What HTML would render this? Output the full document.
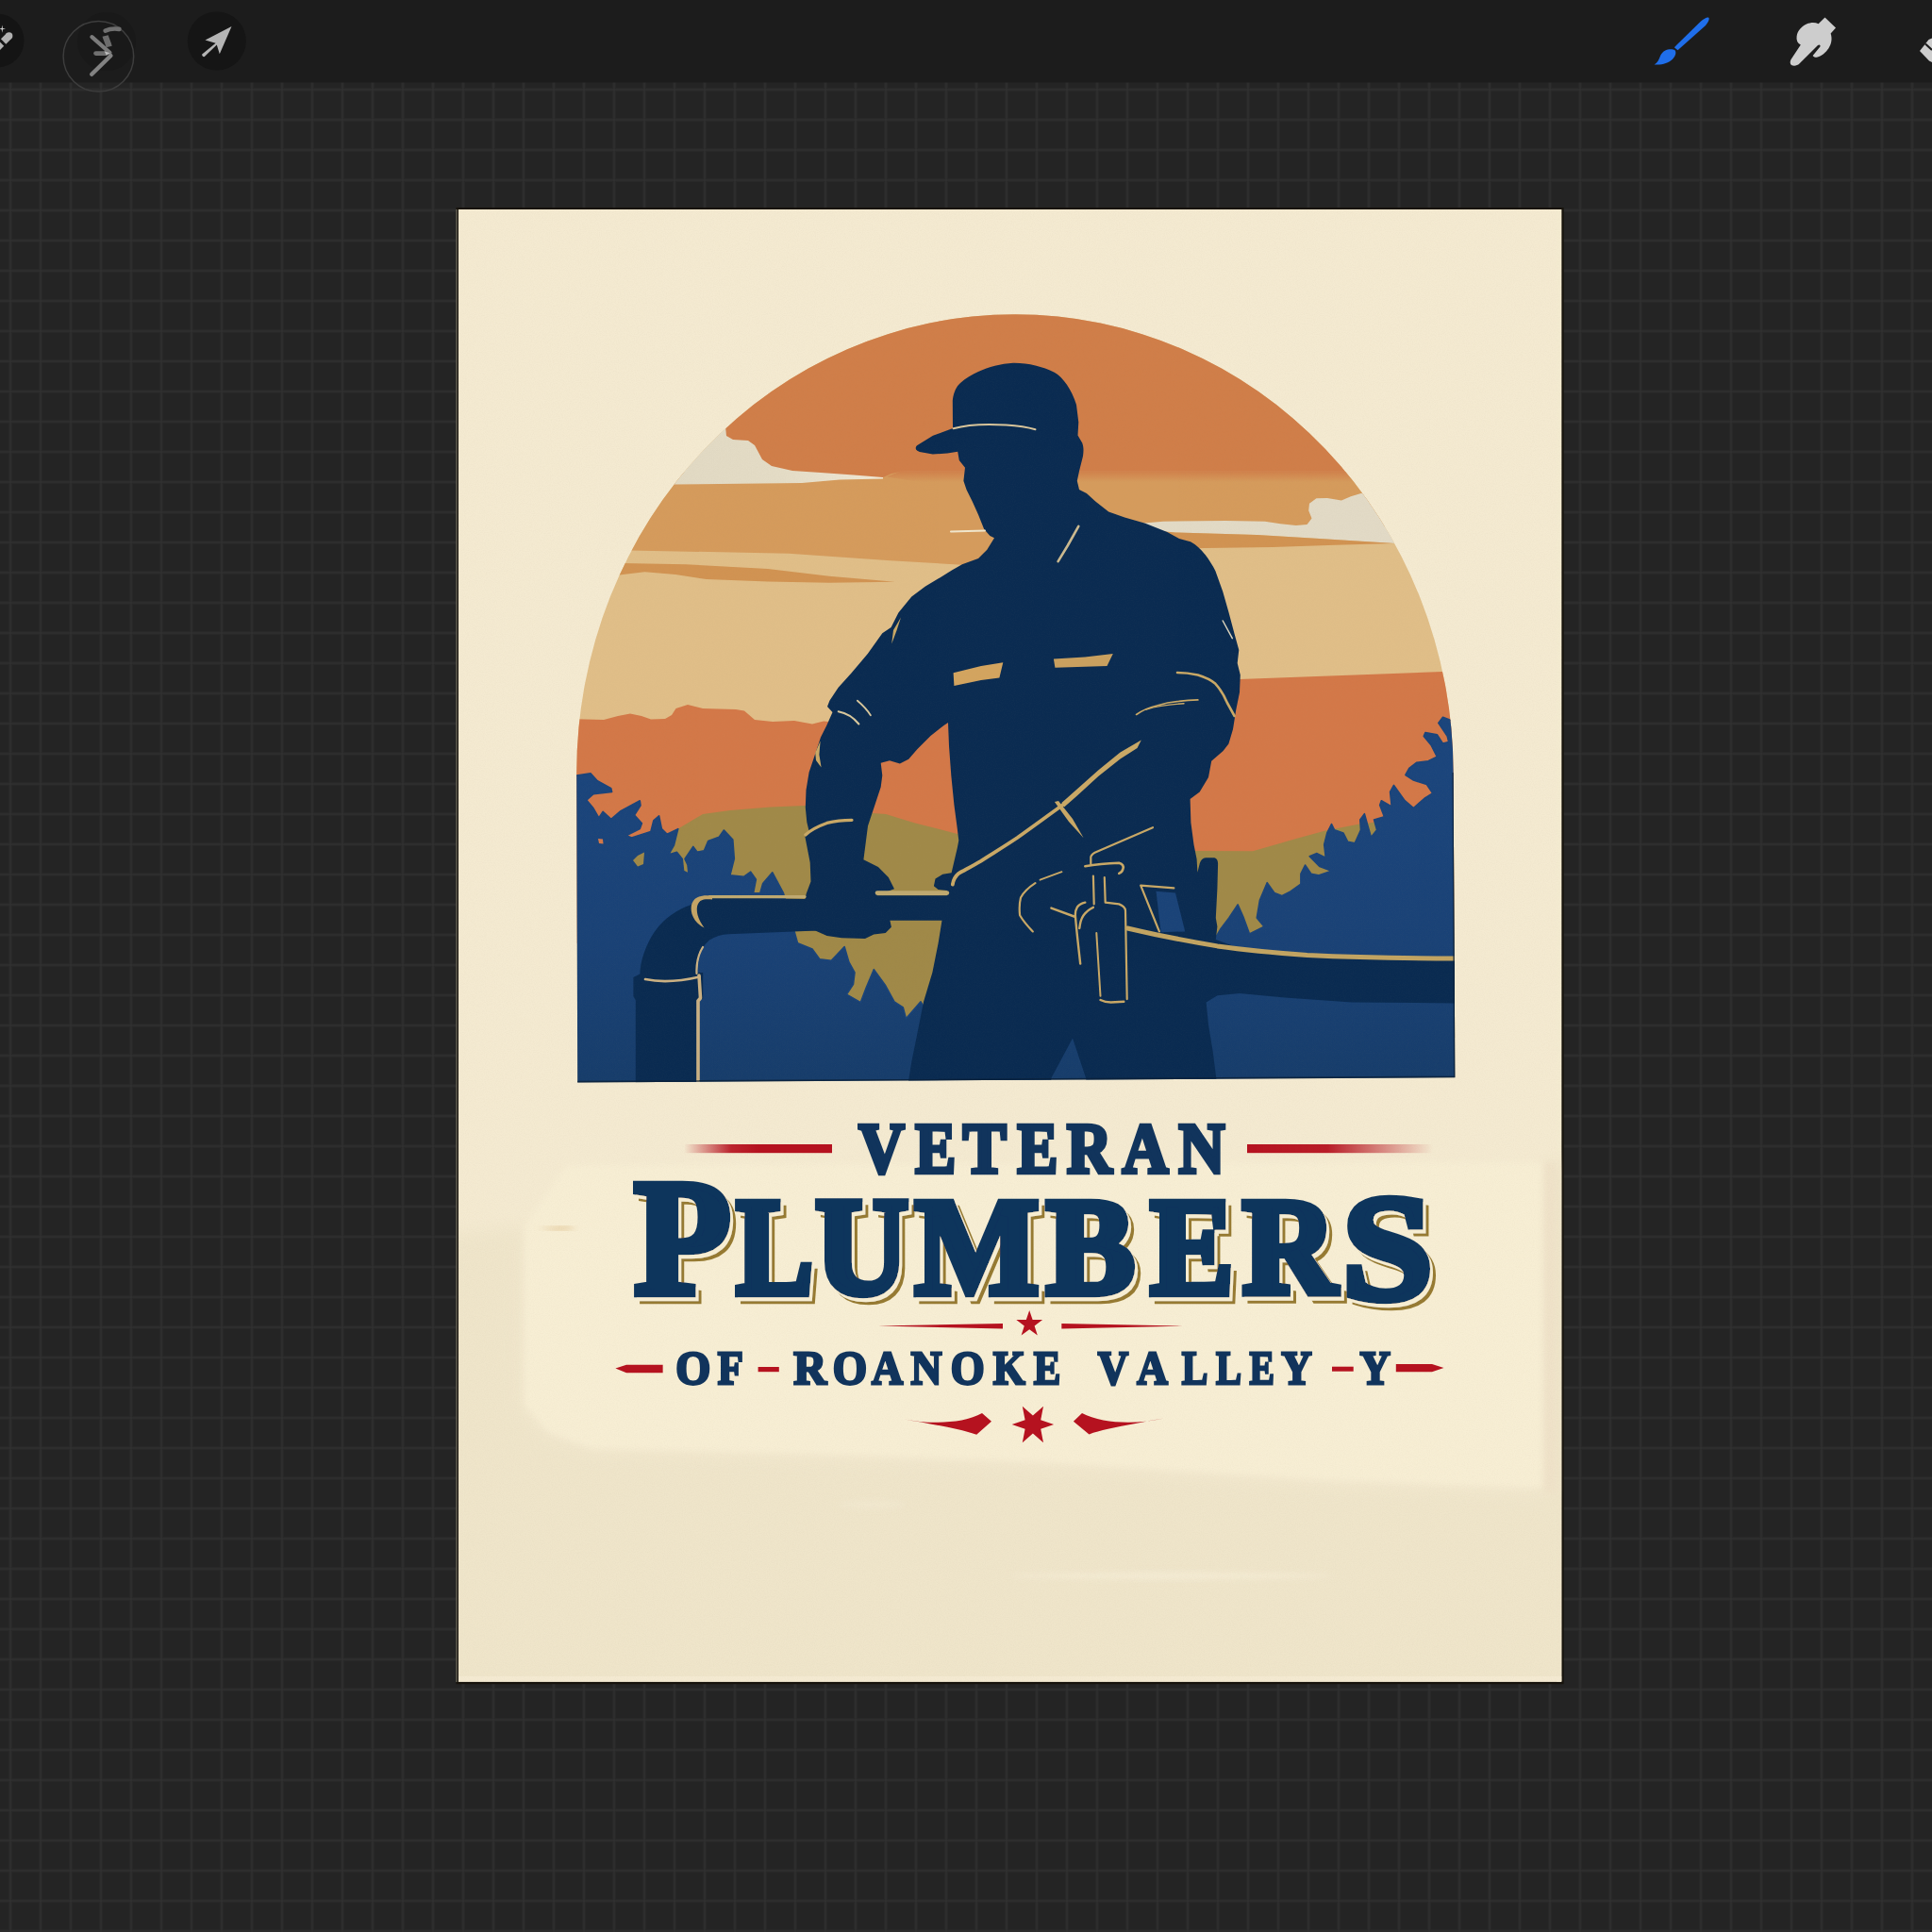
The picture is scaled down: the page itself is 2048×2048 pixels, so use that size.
<!DOCTYPE html>
<html lang="en"><head><meta charset="utf-8"><title>Veteran Plumbers of Roanoke Valley</title>
<style>
html,body{margin:0;padding:0;background:#242424}
body{width:2048px;height:2048px;overflow:hidden;position:relative;font-family:"Liberation Serif","DejaVu Serif",serif}
svg{position:absolute;left:0;top:0;display:block}
</style></head><body>
<svg width="2048" height="2048" viewBox="0 0 2048 2048">
<defs>
<pattern id="grid" x="9" y="29" width="32" height="32" patternUnits="userSpaceOnUse">
<rect x="0" y="0" width="4" height="32" fill="#282828"/><rect x="0" y="0" width="32" height="4" fill="#282828"/>
<rect x="1" y="0" width="2" height="32" fill="#2d2d2d"/><rect x="0" y="1" width="32" height="2" fill="#2d2d2d"/><rect x="1" y="1" width="2" height="2" fill="#303030"/>
</pattern>
<clipPath id="paper"><rect x="486" y="222" width="1169.2" height="1560.6"/></clipPath>
<clipPath id="arch"><path d="M612.2,1147.5 L611.2,819 A464.7,486 0 0 1 1540.6,819 L1542.4,1142.3 Z"/></clipPath>
<linearGradient id="blueg" x1="0" y1="820" x2="0" y2="1147" gradientUnits="userSpaceOnUse">
<stop offset="0" stop-color="#1b457c"/><stop offset="0.55" stop-color="#1a4276"/><stop offset="1" stop-color="#173d6b"/></linearGradient>
<linearGradient id="cloudL" x1="700" y1="0" x2="937" y2="0" gradientUnits="userSpaceOnUse"><stop offset="0" stop-color="#e1d9c3"/><stop offset="0.55" stop-color="#e4dcc6"/><stop offset="1" stop-color="#f0e8d4"/></linearGradient>
<linearGradient id="og" x1="0" y1="498.5" x2="0" y2="511" gradientUnits="userSpaceOnUse"><stop offset="0" stop-color="#d07e49"/><stop offset="1" stop-color="#d07e49" stop-opacity="0"/></linearGradient>
<linearGradient id="redL" x1="725" y1="0" x2="882" y2="0" gradientUnits="userSpaceOnUse">
<stop offset="0" stop-color="#b5121f" stop-opacity="0"/><stop offset="0.32" stop-color="#b5121f" stop-opacity="0.92"/><stop offset="0.5" stop-color="#b5121f"/><stop offset="1" stop-color="#b5121f"/></linearGradient>
<linearGradient id="redR" x1="1322" y1="0" x2="1525" y2="0" gradientUnits="userSpaceOnUse">
<stop offset="0" stop-color="#b5121f"/><stop offset="0.42" stop-color="#b5121f" stop-opacity="0.95"/><stop offset="0.97" stop-color="#b5121f" stop-opacity="0"/><stop offset="1" stop-color="#b5121f" stop-opacity="0"/></linearGradient>
<filter id="sh" x="-5%" y="-10%" width="110%" height="125%">
<feOffset in="SourceAlpha" dx="5.8" dy="6.8" result="o1"/><feFlood flood-color="#967a30"/><feComposite in2="o1" operator="in" result="gold"/>
<feOffset in="SourceAlpha" dx="3" dy="3.6" result="o2"/><feFlood flood-color="#f6edd2"/><feComposite in2="o2" operator="in" result="cream"/>
<feMerge><feMergeNode in="gold"/><feMergeNode in="cream"/><feMergeNode in="SourceGraphic"/></feMerge></filter>
<filter id="soft" x="-10%" y="-20%" width="120%" height="140%"><feGaussianBlur stdDeviation="9"/></filter>
<filter id="soft2" x="-10%" y="-20%" width="120%" height="140%"><feGaussianBlur stdDeviation="3"/></filter>
<filter id="grain" x="0" y="0" width="100%" height="100%">
<feTurbulence type="fractalNoise" baseFrequency="0.9" numOctaves="2" seed="7" result="n"/>
<feColorMatrix type="matrix" values="0 0 0 0 0.45  0 0 0 0 0.38  0 0 0 0 0.25  0 0 0 0.55 -0.2"/>
</filter>
</defs>

<!-- canvas background + grid -->
<rect width="2048" height="2048" fill="#242424"/>
<rect y="87" width="2048" height="1961" fill="url(#grid)"/>
<!-- toolbar -->
<rect width="2048" height="87.5" fill="#1c1c1c"/>
<g id="toolbar-left">
<circle cx="-3" cy="43" r="28.5" fill="#141414"/>
<g stroke="#b0b0b0" stroke-width="7.6" fill="none"><path d="M-4,51.6 L1.5,46.1"/><path d="M3.6,44 L9.6,38"/></g>
<circle cx="9.6" cy="38" r="3.8" fill="#b0b0b0"/>
<path d="M2.3,26.4 L2.9,30 L6,30.6 L2.9,31.2 L2.3,34.8 L1.7,31.2 L-1.4,30.6 L1.7,30 Z" fill="#d0d0d0"/>
<circle cx="113" cy="44" r="31" fill="#191919"/>
<circle cx="104.4" cy="59.8" r="37.3" fill="none" stroke="#3d3d3d" stroke-width="1.5"/>
<g stroke-linecap="round" fill="none">
<path d="M111.6,32.6 C116,30.6 121.5,30.2 126.4,30.9" stroke="#6f6f6f" stroke-width="4.6"/>
<path d="M111.6,38 C112.6,41.6 114.6,45.2 115.6,49.4" stroke="#6c6c6c" stroke-width="6.4" stroke-linecap="butt"/>
<path d="M97.4,39.2 L116.4,55.8" stroke="#7b7b7b" stroke-width="4.2"/>
<path d="M101.6,56.6 L112.6,56.6" stroke="#707070" stroke-width="4.8"/>
<path d="M117.4,59 L97.2,78.8" stroke="#828282" stroke-width="4.4"/>
</g>
<path d="M110.6,54.2 L116.6,56.2 L112.8,58.6 Z" fill="#bdbdbd"/>
<circle cx="229.8" cy="43.5" r="31" fill="#151515"/>
<path d="M245.5,28 L217.5,42.6 L228.6,45.8 L214.2,57.6 A2,2 0 0 0 216.8,60 L229.8,47.6 L232.8,57.2 Z" fill="#b4b4b4"/>
</g>
<g id="toolbar-right">
<path d="M1811,18.6 C1812.5,19.4 1811.5,22.5 1808,27 L1778.5,53.2 L1774.8,50.2 L1802.5,23 C1806.5,19.5 1809.6,17.9 1811,18.6 Z" fill="#1f6eea"/>
<path d="M1775.2,53 C1777.3,55 1776.5,59 1773,62.8 C1768.5,67.3 1760.5,69.3 1753.6,68.4 C1757.2,66.3 1758.4,63.4 1759.6,60.2 C1761.5,55.4 1765,52.6 1769.5,52.2 C1772,52 1774,52.2 1775.2,53 Z" fill="#1f6eea"/>
<path d="M1934.5,18.5 L1946,29.5 L1940.6,35.6 C1942.4,40.8 1941.6,46.5 1938.4,51.2 C1935.4,55.6 1931,59.4 1926.6,60.6 C1924.2,61.2 1922.6,60.4 1921.6,59 L1929,50 C1930.6,48.2 1928.6,46.4 1927,48 L1907.4,67.6 C1905.2,69.8 1901.4,70.4 1899,69 C1897.6,68 1897.2,65.4 1898.4,63.2 L1908.8,47.6 C1905.4,45.8 1904,42.4 1904.6,38.4 C1905.4,33 1909.6,28 1915,25.6 C1919.4,23.6 1924,23.6 1927.6,25.2 Z" fill="#cdcdcd"/>
<path d="M2048,40.5 L2044.5,42 L2035,54 L2045,64.5 L2048,66 Z" fill="#cdcdcd"/>
<path d="M2041,46.5 L2048,53" stroke="#1c1c1c" stroke-width="2.2" fill="none"/>
</g>

<!-- poster paper -->
<g id="poster">
<rect x="483.6" y="220" width="1174" height="1565.2" fill="#17130c"/>
<rect x="483.4" y="222" width="1.3" height="1561" fill="#6e6a5e"/>
<rect x="486" y="222" width="1169.2" height="1560.6" fill="#f4ead1"/>
<rect x="1650" y="222" width="5.2" height="1560.6" fill="#f4ebd1"/>
<!-- flat repainted lower area and darker side strips -->
<g clip-path="url(#paper)"><g filter="url(#soft)">
<path d="M470,1310 L556,1300 L556,1492 L580,1520 L625,1537 L840,1543 L1100,1552 L1400,1572 L1636,1581 L1636,1232 L1670,1232 L1670,1800 L470,1800 Z" fill="#efe5ca"/>
</g></g>
<!-- lighter painted patch behind lettering -->
<g filter="url(#soft2)">
<path d="M556,1300 L600,1236 L905,1234 L1340,1233 L1635,1232 L1635,1577 L1400,1568 L1100,1549 L840,1540 L627,1535 L582,1518 L556,1490 Z" fill="#f7eed4"/>
<rect x="1636" y="1232" width="14" height="350" fill="#efe1c8" opacity=".8"/>
</g>
<rect x="486" y="1777" width="1169.2" height="5.6" fill="#f4ead2"/>
<g filter="url(#soft2)"><ellipse cx="1242" cy="1670.5" rx="172" ry="3.2" fill="#f7efd9" opacity=".75"/><ellipse cx="924" cy="1595" rx="36" ry="4" fill="#f4ebd3" opacity=".6"/></g>
<g filter="url(#soft2)"><path d="M570,1302 L600,1300 L612,1302.5 L590,1304 Z" fill="#d9b57c" opacity=".8"/></g>
<rect x="486" y="222" width="1169.2" height="1560.6" filter="url(#grain)" opacity=".18"/>
</g>
<!-- illustration -->
<g id="illustration" clip-path="url(#arch)">
<rect x="600" y="320" width="960" height="840" fill="#e0be88"/>
<path d="M600,500 L1560,500 L1560,558 L1216,558 L1100,580 L1060,600 L1020,598.7 L944,594.3 L836,586.7 L668,583.5 L600,583 Z" fill="#d59b5c"/>
<path d="M600,440 L940,440 L936,507.5 L890,508.5 L850,512 L714,513.5 L600,513.5 Z" fill="url(#cloudL)"/>
<path d="M600,300 L1560,300 L1560,497 L1420,495.5 L1300,496 L1150,496 L1010,497 L965,497.5 L945,502 L936,506 L905,503.5 L870,501 L840,499 L818,494 L808,487 L800,472 L793,467 L777,466 L770,462 L769,452 L600,452 Z" fill="#d07e49"/>
<path d="M965,495 L1560,494.5 L1560,511 L975,511 L940,505.5 Z" fill="url(#og)"/>
<path d="M600,596 L659.6,597 L727,598.3 L814,603 L879,610.7 L948.7,616.8 L879,617.8 L814,616.5 L748.7,614 L716,609 L683.5,606.3 L656.3,609.6 L600,613 Z" fill="#d19352"/>
<path d="M1210,554.8 L1233,552.8 L1299.4,552 L1340.8,552.8 L1357.3,555.3 L1373.9,557 L1385.5,556.1 L1390.5,549.5 L1387.2,541.2 L1388,533.8 L1395.4,528.3 L1407,528 L1422,530.5 L1431.9,526.3 L1442.6,523 L1560,520 L1560,576.5 L1478.3,576 L1398.8,571 L1332.5,566.9 L1246.4,564.4 L1210,562 Z" fill="#e2dac6"/>
<path d="M1230,563 L1246.4,564.4 L1332.5,566.9 L1398.8,571 L1478.3,576 L1415.3,577.7 L1349,580.1 L1277.8,581 L1230,582 Z" fill="#d19352"/>
<path d="M600,762 L640,763 L655,759 L668,756.5 L680,759 L690,762.5 L705,762 L712,758 L716.5,751 L729,747 L745,751 L780,752 L789,753.5 L800,763 L819,765 L842,764 L861,767.5 L873,764.5 L890,766 L1000,766 L1290,721 L1314,720 L1529,712 L1560,711 L1560,1000 L600,1000 Z" fill="#d37848"/>
<path d="M690,1100 L700,892 L707,886 L718.8,878.6 L745,863 L774,859 L817,855.4 L853,854 L925,862 L939,863 L970,872.4 L1011,883 L1060,895 L1200,902 L1266,902 L1328,902.3 L1374,889 L1405,880.5 L1441,873.5 L1490,868 L1560,868 L1560,1100 Z" fill="#a08948"/>
<path d="M600,822 L610.9,822 L626,819.9 L633.3,827.8 L647.8,835.8 L648.6,839.4 L629,841.6 L621.7,848.1 L629,856.8 L634.8,867 L639.1,860.4 L647.8,868.4 L658,859.7 L678.3,848.8 L679,853.9 L672.5,864 L680.4,872.8 L678.3,878.6 L663.8,885.8 L669.6,888 L689.9,881.4 L692.8,869.9 L698.6,864.8 L701.4,878.6 L707.2,884.3 L718.8,878.6 L714.5,895.9 L708.7,906 L717.4,903.2 L723.2,910.4 L724.6,923.5 L733.3,927.8 L723.2,933.6 L730.4,930.7 L729,917 L726,910.4 L734.8,897.4 L739.1,903.2 L746.4,901.7 L750.7,891.6 L762.3,887.2 L767.4,880 L776.8,890.1 L778.3,910.4 L773.9,927.8 L788.4,929.3 L795.7,924.2 L801.4,932.2 L798.6,946.7 L805.8,946.7 L808.7,936.5 L818.8,924.9 L830.4,946.7 L842,987.3 L845.5,999.8 L861,1006 L868.8,1016.8 L881.2,1018.4 L895.2,1003.6 L899.9,1019.9 L906,1030.8 L904.5,1043.2 L897.5,1054.1 L912.3,1062.6 L918.5,1046.3 L926.3,1027.7 L938.7,1044.8 L948,1061.9 L957.3,1068 L960.4,1079.7 L976,1061.9 L1000,1100 L1280,1000 L1288,995 L1293.5,985.3 L1302.8,972.9 L1312.1,958.9 L1318.3,972.9 L1324.5,990 L1340,982.2 L1332.3,972.9 L1335.4,954.3 L1343.2,935.7 L1350.9,946.5 L1358.7,949.6 L1368,945 L1378.9,937.2 L1378.9,926.3 L1383.5,917 L1389.8,926.3 L1397.5,927.9 L1411.5,923.2 L1399,918.6 L1388.2,907.7 L1396,904.6 L1405.3,909.3 L1403.7,895.3 L1406.8,882.9 L1411.5,873.5 L1414.6,879.8 L1423.9,882.9 L1428.6,892.2 L1436.3,893.7 L1442.5,879.8 L1441.8,868.9 L1446.4,862.7 L1450.3,876.6 L1453.4,887.5 L1459.6,879.8 L1456.5,868.9 L1467.4,865.8 L1462.7,853.4 L1464.3,848.7 L1475.2,854.9 L1473.6,839.4 L1477.5,832.4 L1489.1,848.7 L1498.4,856.5 L1510.9,845.6 L1518.6,840.9 L1512.4,831.6 L1498.4,827 L1489.9,821.5 L1493.8,814.5 L1501.6,808.3 L1514,806.8 L1523.3,802.1 L1517,789.7 L1509.3,780.4 L1510.9,776.5 L1523.3,778.8 L1529.5,788.1 L1535.7,786.6 L1534.2,780.4 L1524.8,766.4 L1529.5,760.2 L1537.3,763.3 L1560,763 L1560,1160 L600,1160 Z" fill="url(#blueg)" stroke="#1b447a" stroke-width="1.6" stroke-linejoin="round"/>
<path d="M634,889 L639,889.5 L639.5,894.5 L635,894 Z" fill="#d37848"/>
<path d="M671,912 L676,907 L683,903.5 L682,916 L676,918.5 Z" fill="#a08948"/>
<path d="M866,953.2 L752,951 C743,949 736.5,952.5 733,959 C715,964.5 699,978 690.5,993 C683.5,1006 679,1018 678.4,1032.4 L671.4,1036 L671.4,1056 L673.8,1060.3 L673.8,1160 L738.2,1160 L738.2,1060.3 L745.2,1058.8 L745.2,1031 L738.2,1031 C737.4,1018 742,1005 752,996.6 C758,992.5 765,990.6 772,990.2 L866,986.4 Z" fill="#0a2b51"/>
<path fill-rule="evenodd" d="M974.8,478.9 C970.5,477.5 969.6,474.6 972,472.2 L989,461.8 L1010,454 L1009.8,424.5 C1011,415 1014,409.5 1018,406 C1024,400.5 1030,397.5 1037,394 C1048,389 1061,385.5 1074,384.8 C1090,384.6 1105,388.5 1117.7,394.8 C1127,400 1136,413 1141,429 L1143.3,447.6 L1142.5,461.6 L1147.2,469.4 C1149,474 1148.6,479 1148,483.4 L1144.1,498.9 L1141.8,509.8 L1144,519 L1151.9,523 L1161.2,531.5 L1175.2,542.4 L1192.2,548.6 L1214,554.8 L1237.3,564.1 L1250,571 L1262,574.2 C1269,578 1273.5,583 1277.6,588.1 C1282,594 1285.5,599.5 1288.4,605.2 L1296.2,627 L1302.4,648.7 L1308.6,672 L1313.3,689 L1311.7,703 L1314.8,715.5 L1314,734 L1310.2,752.7 L1307,773 L1302.4,788.4 L1296.6,796 L1284.2,806.8 L1281,823.9 L1271.7,839.4 L1261.6,847.1 L1262.4,872 L1265.5,895.3 L1268.6,910.8 L1269.4,924.8 L1271.7,915.5 C1273,911.5 1275,909.6 1278,909.3 L1287.3,909.3 C1289.8,909.8 1291,912 1291.1,915.5 L1290.4,941.9 L1288.8,972.9 L1290.4,982.2 L1288.8,996 L1312,1004.5 L1390,1011.5 L1467,1014 L1560,1014.5 L1560,1063.6 L1433,1062.4 L1362,1057.6 L1314,1052.9 L1290.5,1055.2 L1278.6,1062.4 L1281,1086.2 L1285.7,1114.8 L1289.3,1143.3 L1289.3,1160 L1152,1160 L1151.2,1143 L1137,1100.5 L1114.3,1143 L1114,1160 L962,1160 L962.8,1147.3 L966.6,1124 L972.9,1092.9 L979,1061.9 L988.4,1030.8 L994.6,999.8 L998.5,975.7 L943.4,975.7 L944.9,982.7 L938.7,988.9 L926.3,990.4 L917,995.1 L892.1,994.3 L876.6,992 L864.2,986.6 L853.3,986 L853.3,953.2 L854.8,947 L859.5,934.5 L858.7,914.3 L853.3,886.4 L857.6,880.9 L855.3,871.6 L853.8,856 L854.5,837.4 L857.6,818.8 L863.9,800 L870,781.5 L876.3,769 L882.5,755 L877,748.9 L879.4,742.7 L888.7,728.7 L902.7,713.2 L919.8,693 L935.3,671.2 L944.6,665 L952.4,649.5 L966.3,632.4 L981,621.6 L996.6,612.2 L1009,604.5 L1019.9,598.3 L1037,592 L1046.3,582.7 L1054,570.3 L1049.4,568 L1043.2,561 L1037,545.5 L1030.7,531.5 L1024.5,519 L1021.4,509.8 L1023,495.8 L1016.8,488 L1015.2,478.7 L1004.3,480.6 L988.8,481.4 Z M1005,766 L1006,790.8 L1008.3,821.9 L1011.4,852.9 L1014.5,876.2 L1016.3,891 L1014.8,898.8 L1008.6,925.2 L999.3,926.8 L991.5,931.4 L989.9,939.2 L994.6,943 L1003.9,943.9 L1003.9,949.3 L929.4,949.3 L948,942.3 L941.8,929.9 L930.9,919 L915.4,911.2 L920,875.5 L927.5,852.9 L933.7,834.3 L935.3,821.9 L933.7,808.7 L943,806.3 L953.9,809.4 L963.2,804.8 L972.5,793.9 L986.5,779.9 L1000.5,769 Z" fill="#0a2b51"/>
<path d="M1225.5,944.7 L1246,946.4 L1256.2,987.4 L1230.6,988.2 Z" fill="#1a4378"/>
<path d="M1010.6,713.2 L1040,706 L1063.3,702.3 L1059.4,718.6 L1040,721 L1011.4,727.1 Z" fill="#d3a45f"/>
<path d="M1116.9,698.4 L1150,696.5 L1179.8,693 L1173.5,706 L1118.4,707.7 Z" fill="#c9a05f"/>
<path d="M955,654.5 L950.6,668 L945.2,682.6 L947,668 Z" fill="#c9a866"/>
<path d="M869.6,785.5 L864.2,798 L865,806 L870.6,813.5 L868.4,800 Z" fill="#c9a866"/>
<path d="M1209.8,784.6 L1205.5,793 L1187.5,804.6 L1164.2,823 L1141,844.2 L1128.1,855.4 L1125.4,851 L1140.9,837.2 L1164.2,816.6 L1187.5,797.6 Z" fill="#c9a866"/>
<path d="M1117.9,849.9 L1122,849 L1137,868 L1148.6,888.3 L1133,871 Z" fill="#c9a866"/>
<path d="M1010.6,454.3 C1025,450.2 1045,449.3 1066.5,450.6 C1080,451.6 1090,453.2 1097.5,455.2" stroke="#d9c59b" stroke-width="2" fill="none" stroke-linecap="round" stroke-linejoin="round"/>
<path d="M1143.3,557.9 L1132,578 L1121.6,595.2" stroke="#cbb98f" stroke-width="2.6" fill="none" stroke-linecap="round" stroke-linejoin="round"/>
<path d="M1008,563.4 L1044,562.4" stroke="#f0e6cc" stroke-width="2" fill="none" stroke-linecap="round" stroke-linejoin="round"/>
<path d="M888.7,754.3 C898,756 905,761 910.4,767.5" stroke="#d8c79c" stroke-width="2" fill="none" stroke-linecap="round" stroke-linejoin="round"/>
<path d="M908.9,742.7 C914,747 919,752 922.9,758.2" stroke="#d8c79c" stroke-width="1.8" fill="none" stroke-linecap="round" stroke-linejoin="round"/>
<path d="M853.8,885 C860,879 868,875.5 876.6,872.4 C886,870 894,869.3 903,869.3" stroke="#c9a866" stroke-width="3.2" fill="none" stroke-linecap="round" stroke-linejoin="round"/>
<path d="M1127,853 C1117,860 1098,874 1078.4,888 C1062,899 1050,906 1039.6,912.8 C1030,918.5 1022,922.5 1016.3,925.8 C1012.5,929 1010.5,933 1009.8,937.6" stroke="#c9a866" stroke-width="3.8" fill="none" stroke-linecap="round" stroke-linejoin="round"/>
<path d="M1296.2,658 L1306.3,676.6" stroke="#d9d2bb" stroke-width="1.5" fill="none" stroke-linecap="round" stroke-linejoin="round"/>
<path d="M1248,713 C1256,713 1263,714 1269.8,715.5 C1278,718 1284,721 1288.4,724.8 C1294,731 1298,738 1300.9,745 L1308.6,759" stroke="#c9a866" stroke-width="2.6" fill="none" stroke-linecap="round" stroke-linejoin="round"/>
<path d="M1204.6,757.4 C1211,753 1218,750 1226.3,748 C1234,745.5 1242,744 1249.6,743.4 C1257,742.4 1263,742 1269.8,741.9" stroke="#c9a866" stroke-width="1.8" fill="none" stroke-linecap="round" stroke-linejoin="round"/>
<path d="M1215,752 C1226,748.6 1240,746.6 1255,745.8" stroke="#c9a866" stroke-width="1.4" fill="none" stroke-linecap="round" stroke-linejoin="round"/>
<path d="M1222,877.2 L1160.6,903.7 C1157.5,905.5 1156.3,907 1156.3,908.8 L1156.3,915.7" stroke="#c9a866" stroke-width="2.2" fill="none" stroke-linecap="round" stroke-linejoin="round"/>
<path d="M1150.3,918.2 C1162,916.4 1174,915.4 1186.2,914.8 C1190,916 1191.2,918.5 1190.5,920.8 C1190,923.5 1188.5,925 1186.2,925.9" stroke="#c9a866" stroke-width="2.6" fill="none" stroke-linecap="round" stroke-linejoin="round"/>
<path d="M1125.5,924.2 L1102.5,932.7" stroke="#c9a866" stroke-width="1.8" fill="none" stroke-linecap="round" stroke-linejoin="round"/>
<path d="M1097.4,936.2 C1090,941 1085,946 1082,951.5 C1080.4,958 1080.4,964 1081.1,970.3 C1085,977 1090,982.5 1094.8,987.4" stroke="#c9a866" stroke-width="2.2" fill="none" stroke-linecap="round" stroke-linejoin="round"/>
<path d="M1158.9,928.5 L1159.7,958.4" stroke="#c9a866" stroke-width="2.2" fill="none" stroke-linecap="round" stroke-linejoin="round"/>
<path d="M1170.8,930.2 L1171.7,956.6 L1186.2,958.4 C1190.5,960 1192.6,962 1193,965.2 L1194.7,1059.1" stroke="#c9a866" stroke-width="2.2" fill="none" stroke-linecap="round" stroke-linejoin="round"/>
<path d="M1166.5,1060 C1170,1061.8 1174,1062.5 1177.6,1062.5 L1191.3,1061.7" stroke="#c9a866" stroke-width="2.4" fill="none" stroke-linecap="round" stroke-linejoin="round"/>
<path d="M1162.3,989.1 L1166.5,1055.7" stroke="#c9a866" stroke-width="2" fill="none" stroke-linecap="round" stroke-linejoin="round"/>
<path d="M1158.9,961.8 C1154,964 1151,967 1148.6,970.3 C1146,974 1144.8,979 1144.3,984" stroke="#c9a866" stroke-width="2.4" fill="none" stroke-linecap="round" stroke-linejoin="round"/>
<path d="M1114.4,962.6 L1140,972 M1140,972 C1139.5,967 1140.4,964 1141.8,961.8 C1144,958.6 1147,957.2 1150.3,956.6 M1140,972 C1141.5,990 1143.5,1006 1145.2,1021.6" stroke="#c9a866" stroke-width="2.4" fill="none" stroke-linecap="round" stroke-linejoin="round"/>
<path d="M1244.3,941.3 L1209.2,938.7 L1228.9,987.4" stroke="#c9a866" stroke-width="2.2" fill="none" stroke-linecap="round" stroke-linejoin="round"/>
<path d="M1195.2,984 C1225,991 1258,997.5 1290.5,1002.9 C1320,1007 1352,1010 1385.7,1012.4 C1440,1015 1490,1016 1560,1016" stroke="#c2a462" stroke-width="5" fill="none" stroke-linecap="round" stroke-linejoin="round"/>
<path d="M853,950.6 L752,950.6" stroke="#bfa970" stroke-width="3.2" fill="none" stroke-linecap="round" stroke-linejoin="round"/>
<path d="M1003.9,946.6 L930,946.6" stroke="#bfa970" stroke-width="4.6" fill="none" stroke-linecap="round" stroke-linejoin="round"/>
<path d="M741,1034 L742.5,1058 L740,1061 L740,1160" stroke="#cbb183" stroke-width="3.6" fill="none" stroke-linecap="round" stroke-linejoin="round"/>
<path d="M684,1038 C700,1041.5 720,1040.5 741.5,1035.5" stroke="#cbb183" stroke-width="2.6" fill="none" stroke-linecap="round" stroke-linejoin="round"/>
<path d="M738.5,1032 C738,1022 740,1012 745,1004" stroke="#cbb183" stroke-width="2.2" fill="none" stroke-linecap="round" stroke-linejoin="round"/>
<path d="M755,949.8 C748,948.4 740,949.6 736.5,953 C732.5,957 731.8,963 733.5,969 C735.5,975 740,980.5 746.5,983.5 C741,976 738.5,969 738.8,963 C739,958 741.5,954.6 746,953.6 C749,953 752,953.2 755,953.6 Z" fill="#c4a466"/>
<rect x="600" y="320" width="960" height="840" filter="url(#grain)" opacity=".12"/>
<path d="M612,1146.6 L1542.4,1141.4 M1540.2,819 L1541.8,1142" stroke="#0b2138" stroke-width="1.6" fill="none" opacity=".8"/>
</g>
<!-- lettering -->
<g id="lettering" font-family='"Liberation Serif","DejaVu Serif",serif' font-weight="700" fill="#11345c" stroke="#11345c" stroke-linejoin="miter" stroke-miterlimit="3">
<text id="veteran" stroke-width="4.6"><tspan x="910.25" y="1242.60" font-size="76.36" textLength="48.51" lengthAdjust="spacingAndGlyphs">V</tspan><tspan x="970.20" y="1242.60" font-size="76.36" textLength="42.78" lengthAdjust="spacingAndGlyphs">E</tspan><tspan x="1020.82" y="1242.60" font-size="76.36" textLength="45.92" lengthAdjust="spacingAndGlyphs">T</tspan><tspan x="1078.41" y="1242.60" font-size="76.36" textLength="42.67" lengthAdjust="spacingAndGlyphs">E</tspan><tspan x="1131.07" y="1242.60" font-size="76.36" textLength="47.55" lengthAdjust="spacingAndGlyphs">R</tspan><tspan x="1189.64" y="1242.60" font-size="76.36" textLength="48.75" lengthAdjust="spacingAndGlyphs">A</tspan><tspan x="1249.42" y="1242.60" font-size="76.36" textLength="48.67" lengthAdjust="spacingAndGlyphs">N</tspan></text>
<text id="plumbers" filter="url(#sh)" stroke-width="8.6"><tspan x="672.23" y="1370.90" font-size="175.63" textLength="102.52" lengthAdjust="spacingAndGlyphs">P</tspan><tspan x="780.61" y="1371.10" font-size="146.92" textLength="81.41" lengthAdjust="spacingAndGlyphs">L</tspan><tspan x="864.61" y="1371.10" font-size="146.92" textLength="98.28" lengthAdjust="spacingAndGlyphs">U</tspan><tspan x="970.12" y="1371.10" font-size="146.92" textLength="131.18" lengthAdjust="spacingAndGlyphs">M</tspan><tspan x="1109.27" y="1371.10" font-size="146.92" textLength="93.75" lengthAdjust="spacingAndGlyphs">B</tspan><tspan x="1219.54" y="1371.10" font-size="146.92" textLength="88.13" lengthAdjust="spacingAndGlyphs">E</tspan><tspan x="1317.15" y="1371.10" font-size="146.92" textLength="99.34" lengthAdjust="spacingAndGlyphs">R</tspan><tspan x="1422.95" y="1375.70" font-size="159.44" textLength="95.66" lengthAdjust="spacingAndGlyphs">S</tspan></text>
<text id="of-roanoke-valley" stroke-width="2.8"><tspan x="716.17" y="1467.20" font-size="51.62" textLength="37.05" lengthAdjust="spacingAndGlyphs">O</tspan><tspan x="760.64" y="1467.20" font-size="51.62" textLength="27.08" lengthAdjust="spacingAndGlyphs">F</tspan> <tspan x="841.27" y="1467.20" font-size="51.62" textLength="34.90" lengthAdjust="spacingAndGlyphs">R</tspan><tspan x="882.82" y="1467.20" font-size="51.62" textLength="36.37" lengthAdjust="spacingAndGlyphs">O</tspan><tspan x="923.95" y="1467.20" font-size="51.62" textLength="33.19" lengthAdjust="spacingAndGlyphs">A</tspan><tspan x="965.43" y="1467.20" font-size="51.62" textLength="32.87" lengthAdjust="spacingAndGlyphs">N</tspan><tspan x="1007.65" y="1467.20" font-size="51.62" textLength="35.91" lengthAdjust="spacingAndGlyphs">O</tspan><tspan x="1052.65" y="1467.20" font-size="51.62" textLength="33.99" lengthAdjust="spacingAndGlyphs">K</tspan><tspan x="1095.67" y="1467.20" font-size="51.62" textLength="28.52" lengthAdjust="spacingAndGlyphs">E</tspan> <tspan x="1163.80" y="1467.20" font-size="51.62" textLength="32.41" lengthAdjust="spacingAndGlyphs">V</tspan><tspan x="1205.26" y="1467.20" font-size="51.62" textLength="32.67" lengthAdjust="spacingAndGlyphs">A</tspan><tspan x="1252.69" y="1467.20" font-size="51.62" textLength="27.54" lengthAdjust="spacingAndGlyphs">L</tspan><tspan x="1288.91" y="1467.20" font-size="51.62" textLength="26.99" lengthAdjust="spacingAndGlyphs">L</tspan><tspan x="1324.62" y="1467.20" font-size="51.62" textLength="26.41" lengthAdjust="spacingAndGlyphs">E</tspan><tspan x="1358.21" y="1467.20" font-size="51.62" textLength="32.45" lengthAdjust="spacingAndGlyphs">Y</tspan> <tspan x="1441.61" y="1467.20" font-size="51.62" textLength="32.45" lengthAdjust="spacingAndGlyphs">Y</tspan></text>
</g>
<g id="ornaments" fill="#b5121f">
<rect x="725" y="1213" width="157" height="9.2" fill="url(#redL)"/>
<rect x="1322" y="1213" width="203" height="9.2" fill="url(#redR)"/>
<path d="M931,1405.6 L1063,1403 L1063,1408.4 Z"/>
<path d="M1125.3,1403 L1254,1405.6 L1125.3,1408.4 Z"/>
<path d="M1091.2,1389.0 L1094.6,1399.0 L1105.1,1399.1 L1096.6,1405.4 L1099.8,1415.4 L1091.2,1409.3 L1082.6,1415.4 L1085.8,1405.4 L1077.3,1399.1 L1087.8,1399.0 Z"/>
<path d="M652.4,1450.4 L664,1446.8 L702.6,1446.8 L702.6,1455.2 L664,1455.2 Z"/>
<rect x="803.6" y="1449" width="22.2" height="5.2"/>
<rect x="1412" y="1448.7" width="22.7" height="5"/>
<path d="M1479.8,1445.9 L1518,1445.9 L1530.5,1450 L1518,1454.2 L1479.8,1454.2 Z"/>
<path d="M957.4,1504.2 C978,1508.5 1000,1509 1019.5,1505.6 C1028,1503.6 1035,1501 1041,1497.9 L1051,1506.7 L1035.2,1520.8 C1029,1518.6 1022,1516.6 1014.5,1515 C996,1511 976,1507.4 957.4,1504.2 Z"/>
<path d="M1234,1503.6 C1212,1508.5 1189,1509 1169.5,1505.6 C1161,1503.6 1153,1501 1147,1497.9 L1137.9,1506.7 L1154.5,1520.4 C1160,1518.4 1167,1516.4 1174.5,1514.8 C1193,1510.8 1214,1507 1234,1503.6 Z"/>
<path d="M1117.1,1510.0 L1103.2,1514.8 L1106.0,1529.2 L1094.9,1519.6 L1083.8,1529.2 L1086.6,1514.8 L1072.7,1510.0 L1086.6,1505.2 L1083.8,1490.8 L1094.9,1500.4 L1106.0,1490.8 L1103.2,1505.2 Z"/>
</g>
</svg></body></html>
